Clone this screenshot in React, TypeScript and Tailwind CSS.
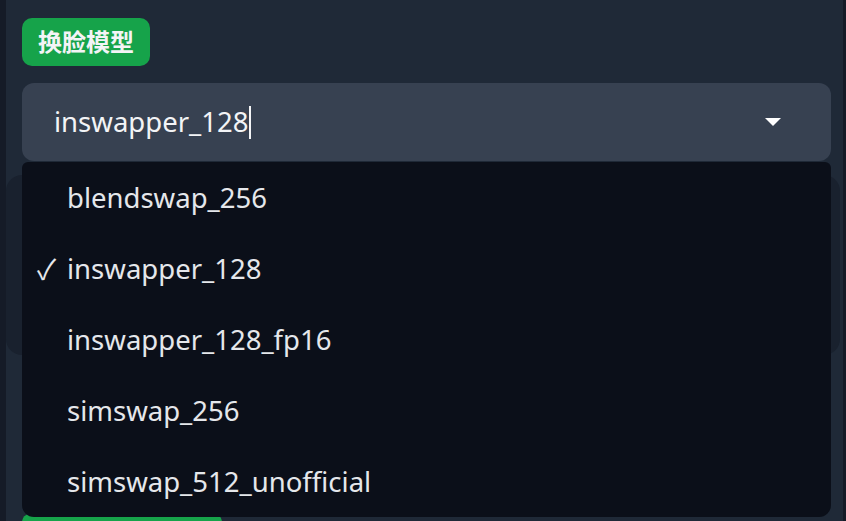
import React from "react";

const models = [
  "blendswap_256",
  "inswapper_128",
  "inswapper_128_fp16",
  "simswap_256",
  "simswap_512_unofficial",
];

const font = { fontFamily: '"Noto Sans", "Noto Sans CJK SC", sans-serif' };

export default function App() {
  const selected = "inswapper_128";

  return (
    <div className="flex h-[521px] w-[846px] overflow-hidden bg-[#151b27]" style={font}>
      <div className="relative ml-[6px] mr-[3px] flex-1 bg-[#1f2937]">
        <div className="pl-4 pt-[18px]">
          <span className="inline-flex h-[48px] items-center rounded-[10px] bg-[#16a34a] px-4 text-[24px] font-bold text-gray-100">
            换脸模型
          </span>
        </div>

        <div className="relative ml-4 mr-3 mt-[17px]">
          <div className="flex h-[78px] items-center rounded-xl bg-[#374151] pl-8 pr-[50px]">
            <span className="text-[27.5px] text-gray-100">{selected}</span>
            <span className="ml-px h-[33px] w-[2px] bg-gray-100" />
            <div className="ml-auto h-0 w-0 border-x-[8px] border-t-[8px] border-x-transparent border-t-white" />
          </div>

          {/* open listbox */}
          <ul className="absolute left-0 right-0 top-[79px] z-10 rounded-b-xl rounded-t-md bg-[#0b0f19]">
            {models.map((m) => (
              <li key={m} className="relative flex h-[71px] items-center pl-[45px] text-[27.5px] text-gray-200">
                {m === selected && (
                  <span className="absolute left-[15px] text-[28px]">✓</span>
                )}
                {m}
              </li>
            ))}
          </ul>
        </div>

        <div className="mr-[3px] mt-[14px] h-[180px] rounded-2xl bg-[#19212e]" />

        <div className="ml-4 mt-[159px] h-[40px] w-[200px] rounded-lg bg-[#16a34a]" />
      </div>
    </div>
  );
}
